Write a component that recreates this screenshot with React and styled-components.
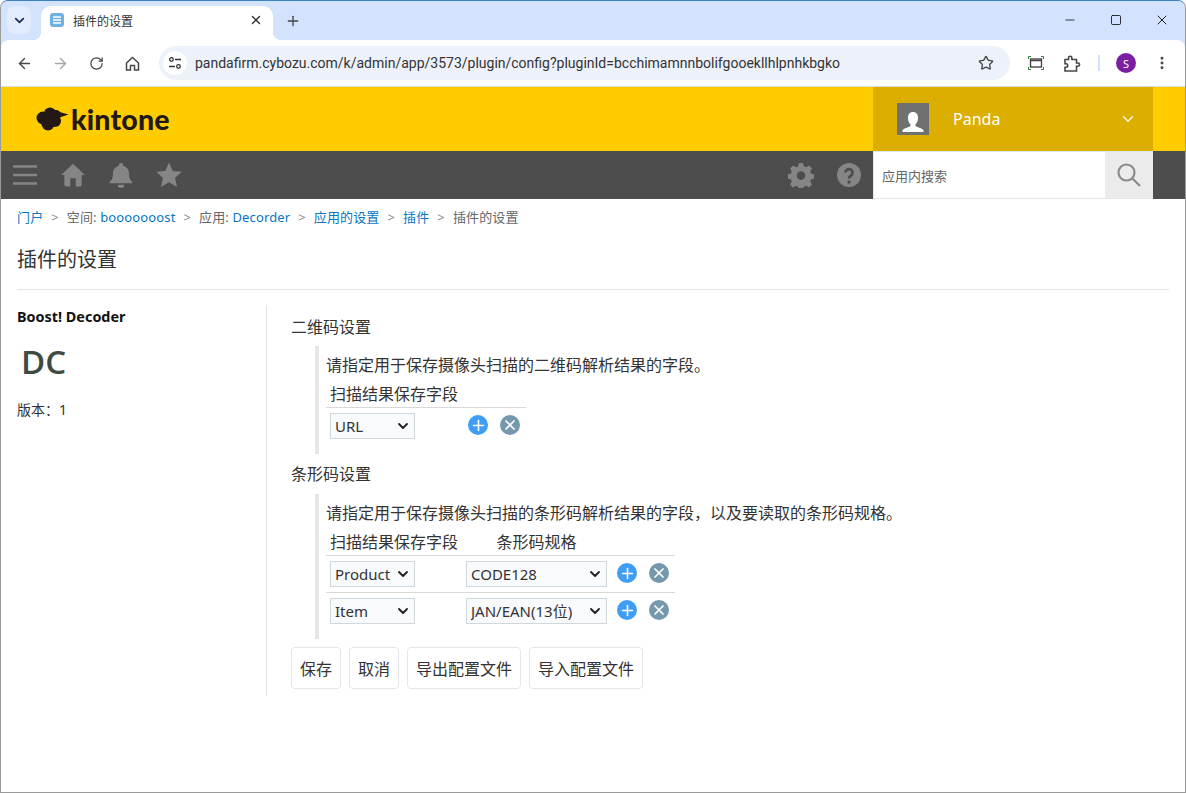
import styled, { createGlobalStyle } from "styled-components";
import {
  ArrowLeft,
  ArrowRight,
  ChevronDown,
  Minus,
  MoreVertical,
  Plus,
  RotateCw,
  Square,
  Star,
  X,
} from "lucide-react";

const GlobalStyle = createGlobalStyle`
  html, body {
    margin: 0;
    padding: 0;
    background: #fff;
  }
  * {
    box-sizing: border-box;
  }
`;

const FONT = `"Noto Sans", "Open Sans", "Noto Sans CJK SC", sans-serif`;
const CJK = `"Noto Sans CJK SC", "Noto Sans", sans-serif`;

const Window = styled.div`
  width: 1186px;
  height: 793px;
  overflow: hidden;
  display: flex;
  flex-direction: column;
  background: #d3e3fd;
  border-top: 1px solid #3b82c4;
  border-left: 1px solid #9a9a9a;
  border-right: 1px solid #9a9a9a;
  border-bottom: 1px solid #9a9a9a;
  border-radius: 8px 8px 0 0;
  font-family: ${FONT};
  color: #333;
`;

const TabStrip = styled.div`
  height: 39px;
  flex: none;
  display: flex;
  align-items: flex-start;
  background: #d3e3fd;
  padding: 5px 0 0 6px;
`;

const TabList = styled.div`
  width: 24px;
  height: 28px;
  display: flex;
  align-items: center;
  justify-content: center;
  border-radius: 8px;
  background: #e3ecfc;
  color: #1f3157;
`;

const Tab = styled.div`
  position: relative;
  width: 232px;
  height: 34px;
  margin-left: 10px;
  padding: 0 10px 6px 9px;
  display: flex;
  align-items: center;
  gap: 9px;
  border-radius: 10px 10px 0 0;
  background: #fff;
  font-family: ${CJK};
  font-size: 12px;
  color: #333;

  &::before,
  &::after {
    content: "";
    position: absolute;
    bottom: 0;
    width: 8px;
    height: 8px;
  }
  &::before {
    left: -8px;
    background: radial-gradient(circle at 0 0, transparent 8px, #fff 8px);
  }
  &::after {
    right: -8px;
    background: radial-gradient(circle at 100% 0, transparent 8px, #fff 8px);
  }
`;

const TabTitle = styled.span`
  flex: 1;
`;

const NewTab = styled.div`
  width: 40px;
  height: 30px;
  display: flex;
  align-items: center;
  justify-content: center;
  color: #444;
`;

const WindowControls = styled.div`
  margin-left: auto;
  display: flex;
  align-items: center;
  height: 28px;
  color: #000;
`;

const WindowButton = styled.div`
  width: 46px;
  display: flex;
  justify-content: center;
`;

const Toolbar = styled.div`
  height: 47px;
  flex: none;
  display: flex;
  align-items: center;
  background: #fff;
  padding-left: 5px;
  border-bottom: 1px solid #dcdcdc;
  border-radius: 8px 8px 0 0;
`;

const NavButton = styled.div`
  width: 36px;
  display: flex;
  justify-content: center;
  color: ${(p) => (p.$muted ? "#a3a6ab" : "#474747")};
`;

const AddressBar = styled.div`
  width: 851px;
  height: 34px;
  margin-left: 9px;
  padding: 0 16px 0 3px;
  display: flex;
  align-items: center;
  border-radius: 17px;
  background: #edf2fa;
  color: #474747;
`;

const SiteInfo = styled.div`
  width: 24px;
  height: 24px;
  margin-left: 1px;
  display: flex;
  align-items: center;
  justify-content: center;
  border-radius: 50%;
  background: #fff;
`;

const Url = styled.span`
  flex: 1;
  margin-left: 8px;
  font-family: "Roboto", sans-serif;
  font-size: 14px;
  color: #333;
`;

const ToolGroup = styled.div`
  display: flex;
  align-items: center;
  margin-left: 7px;
  color: #474747;
`;

const ToolIcon = styled.div`
  width: 37px;
  display: flex;
  justify-content: center;
`;

const Divider = styled.div`
  width: 2px;
  height: 16px;
  margin: 0 8px 0 7px;
  background: #d3e3fd;
`;

const Avatar = styled.div`
  width: 20px;
  height: 20px;
  margin-left: 8px;
  display: flex;
  align-items: center;
  justify-content: center;
  border-radius: 50%;
  background: #7b1fa2;
  color: #fff;
  font-size: 11px;
`;

const Dots = styled.div`
  margin-left: 18px;
  display: flex;
  color: #474747;
`;

const Header = styled.header`
  height: 64px;
  flex: none;
  display: flex;
  justify-content: space-between;
  background: #ffcc00;
  padding-right: 32px;
`;

const Logo = styled.div`
  display: flex;
  align-items: center;
  padding-left: 35px;
  gap: 2px;
`;

const LogoText = styled.span`
  font-family: "Lato", "Noto Sans", sans-serif;
  font-weight: 900;
  font-size: 28.5px;
  letter-spacing: 0.2px;
  color: #231815;
`;

const UserBox = styled.div`
  width: 280px;
  display: flex;
  align-items: center;
  padding: 0 16px 0 24px;
  background: #dbae00;
  color: #fff;
`;

const UserPhoto = styled.div`
  width: 32px;
  height: 32px;
  display: flex;
  align-items: flex-end;
  justify-content: center;
  background: #6f7070;
`;

const UserName = styled.span`
  flex: 1;
  margin-left: 24px;
  font-size: 16px;
`;

const NavBar = styled.nav`
  height: 48px;
  flex: none;
  display: flex;
  align-items: center;
  background: #4d4d4d;
  padding-right: 32px;
`;

const NavIcon = styled.div`
  width: 48px;
  height: 48px;
  display: flex;
  align-items: center;
  justify-content: center;
`;

const NavSpacer = styled.div`
  flex: 1;
`;

const SearchBox = styled.div`
  width: 280px;
  height: 48px;
  display: flex;
  background: #fff;
  border: 1px solid #e3e7e8;
  border-right: 0;
`;

const SearchText = styled.div`
  flex: 1;
  display: flex;
  align-items: center;
  padding-left: 8px;
  font-family: ${CJK};
  font-size: 13px;
  color: #666;
`;

const SearchButton = styled.div`
  width: 48px;
  display: flex;
  align-items: center;
  justify-content: center;
  background: #ebebeb;
`;

const Main = styled.main`
  flex: 1;
  padding: 0 16px;
  background: #fff;
`;

const Breadcrumb = styled.div`
  height: 36px;
  display: flex;
  align-items: center;
  padding-bottom: 1px;
  font-family: ${FONT};
  font-size: 13px;
  letter-spacing: 0.13px;
  color: #666;
`;

const Crumb = styled.a`
  color: #0675c4;
  text-decoration: none;
`;

const Sep = styled.span`
  margin: 0 8px;
  color: #888;
`;

const Title = styled.h1`
  margin: 0;
  height: 55px;
  padding-top: 10px;
  border-bottom: 1px solid #e3e3e3;
  font-family: ${CJK};
  font-weight: 400;
  font-size: 20px;
  line-height: 28px;
  color: #333;
`;

const Columns = styled.div`
  display: flex;
  margin-top: 15px;
`;

const Side = styled.aside`
  width: 250px;
  flex: none;
  height: 391px;
  border-right: 1px solid #e3e3e3;
`;

const PluginName = styled.div`
  font-weight: 700;
  font-size: 14.4px;
  line-height: 24px;
  color: #111;
`;

const PluginIcon = styled.div`
  margin: 11px 0 0 4px;
  font-family: "Open Sans", sans-serif;
  font-weight: 600;
  font-size: 33px;
  line-height: 44px;
  color: #3e4b43;
`;

const Version = styled.div`
  margin-top: 14px;
  font-size: 14px;
  line-height: 24px;
  color: #333;
`;

const Content = styled.div`
  flex: 1;
  padding: 2px 0 0 24px;
  font-size: 16px;
  color: #333;
`;

const SectionTitle = styled.div`
  line-height: 24px;
  padding-top: 8px;
`;

const Block = styled.div`
  margin: ${(p) => p.$gap}px 0 0 24px;
  padding: 7px 0 0 7px;
  height: ${(p) => p.$height}px;
  border-left: 4px solid #e3e7e8;
`;

const Description = styled.div`
  line-height: 24px;
`;

const Table = styled.table`
  border-collapse: collapse;
`;

const Th = styled.th`
  padding: 6px 4px 2px;
  font-weight: 400;
  line-height: 22px;
  white-space: nowrap;
  text-align: center;
  border-bottom: 1px solid #d8d8d8;
`;

const Td = styled.td`
  padding: 5px 4px;
  vertical-align: top;
  border-bottom: ${(p) => (p.$last ? "0" : "1px solid #d8d8d8")};
`;

const SelectWrap = styled.div`
  position: relative;
  width: ${(p) => p.$width}px;
  height: 26px;
`;

const Select = styled.select`
  width: 100%;
  height: 100%;
  padding: 0 0 0 4px;
  border: 1px solid #cfd8dc;
  border-radius: 0;
  background: #f9fafb;
  font-family: ${FONT};
  font-size: 15px;
  color: #333;
  appearance: none;
  outline: none;
`;

const Caret = styled.span`
  position: absolute;
  right: 4px;
  top: 5px;
  display: flex;
  pointer-events: none;
  color: #222;
`;

const Actions = styled.div`
  width: 54px;
  display: flex;
  justify-content: space-between;
  padding-left: 2px;
  margin: 2px 2px 0 0;
`;

const RoundButton = styled.div`
  width: 20px;
  height: 20px;
  display: flex;
  align-items: center;
  justify-content: center;
  border-radius: 50%;
  background: ${(p) => p.$bg};
  color: #fff;
`;

const Footer = styled.div`
  display: flex;
  gap: 8px;
  margin-top: 8px;
`;

const Button = styled.button`
  height: 42px;
  padding: 0 8px;
  border: 1px solid #e3e7e8;
  border-radius: 4px;
  background: #fff;
  font-family: ${CJK};
  font-size: 16px;
  color: #333;
`;

function Pick({ width, value }) {
  return (
    <SelectWrap $width={width}>
      <Select defaultValue={value}>
        <option>{value}</option>
      </Select>
      <Caret>
        <ChevronDown size={16} strokeWidth={2.8} />
      </Caret>
    </SelectWrap>
  );
}

function RowActions() {
  return (
    <Actions>
      <RoundButton $bg="#3f9ef3">
        <Plus size={17} strokeWidth={2.2} />
      </RoundButton>
      <RoundButton $bg="#7499ad">
        <X size={16} strokeWidth={2.6} />
      </RoundButton>
    </Actions>
  );
}

function FilledIcon({ d, size = 26 }) {
  return (
    <svg width={size} height={size} viewBox="0 0 24 24" fill="#858585">
      <path d={d} />
    </svg>
  );
}

function App() {
  return (
    <>
      <GlobalStyle />
      <Window>
        <TabStrip>
          <TabList>
            <ChevronDown size={15} strokeWidth={3} />
          </TabList>
          <Tab>
            <svg width="14" height="14" viewBox="0 0 14 14">
              <rect width="14" height="14" rx="3" fill="#6db2e0" />
              <path d="M3 4h8M3 7h8M3 10h8" stroke="#fff" strokeWidth="1.4" />
            </svg>
            <TabTitle>插件的设置</TabTitle>
            <X size={14} strokeWidth={2.4} color="#333" />
          </Tab>
          <NewTab>
            <Plus size={16} strokeWidth={2} />
          </NewTab>
          <WindowControls>
            <WindowButton>
              <Minus size={14} strokeWidth={1.3} />
            </WindowButton>
            <WindowButton>
              <Square size={12} strokeWidth={1.6} />
            </WindowButton>
            <WindowButton>
              <X size={16} strokeWidth={1.3} />
            </WindowButton>
          </WindowControls>
        </TabStrip>

        <Toolbar>
          <NavButton>
            <ArrowLeft size={17} strokeWidth={2} />
          </NavButton>
          <NavButton $muted>
            <ArrowRight size={17} strokeWidth={2} />
          </NavButton>
          <NavButton>
            <RotateCw size={15} strokeWidth={2} />
          </NavButton>
          <NavButton>
            <svg width="15" height="15" viewBox="0 0 15 15" fill="none" stroke="#474747" strokeWidth="1.5">
              <path d="M1.500 7L7.500 1.500L13.500 7V14H9.500V9.500H5.500V14H1.500Z" />
            </svg>
          </NavButton>
          <AddressBar>
            <SiteInfo>
              <svg width="14" height="14" viewBox="0 0 14 14" fill="none" stroke="#333" strokeWidth="1.3">
                <circle cx="3.500" cy="3.500" r="1.800" />
                <path d="M7 3.500h6M1 10.500h6" />
                <circle cx="10.500" cy="10.500" r="1.800" />
              </svg>
            </SiteInfo>
            <Url>pandafirm.cybozu.com/k/admin/app/3573/plugin/config?pluginId=bcchimamnnbolifgooekllhlpnhkbgko</Url>
            <Star size={16} strokeWidth={2} />
          </AddressBar>
          <ToolGroup>
            <ToolIcon>
              <svg width="16" height="14" viewBox="0 0 16 14" fill="none">
                <path d="M.5 3V.5H3M13 .5h2.500V3M.5 11v2.500H3M13 13.500h2.500V11" stroke="#2e7d32" />
                <rect x="2.500" y="3" width="11" height="8" stroke="#474747" strokeWidth="1.4" />
                <path d="M2.500 4.500h11" stroke="#474747" strokeWidth="1.4" />
              </svg>
            </ToolIcon>
            <ToolIcon>
              <svg width="17" height="17" viewBox="0 0 17 17" fill="none" stroke="#474747" strokeWidth="1.6">
                <path d="M1 4.500h3.500V3a1.700 1.700 0 0 1 3.400 0v1.500h4.600V8H14a1.600 1.600 0 0 1 0 3.200h-1.500V16H1v-3.800h1a1.700 1.700 0 0 0 0-3.400H1Z" />
              </svg>
            </ToolIcon>
            <Divider />
            <Avatar>S</Avatar>
            <Dots>
              <MoreVertical size={16} strokeWidth={2.4} />
            </Dots>
          </ToolGroup>
        </Toolbar>

        <Header>
          <Logo>
            <svg width="33" height="24" viewBox="0 0 33 24" fill="#231815">
              <circle cx="7" cy="11" r="6.500" />
              <circle cx="14" cy="6.500" r="6" />
              <circle cx="20" cy="8" r="5" />
              <circle cx="12" cy="17" r="6.500" />
              <circle cx="19" cy="14" r="6" />
              <path d="M20 4L32.500 7.500L22 11Z" />
            </svg>
            <LogoText>kintone</LogoText>
          </Logo>
          <UserBox>
            <UserPhoto>
              <svg width="24" height="24" viewBox="0 0 24 24" fill="#fff">
                <path d="M12 1c3 0 5 2 5 6 0 3-1 5-2.500 6.500V15c1 1 6 2 8 4v2H1.500v-2c2-2 7-3 8-4v-1.500C8 12 7 10 7 7c0-4 2-6 5-6Z" />
              </svg>
            </UserPhoto>
            <UserName>Panda</UserName>
            <ChevronDown size={18} strokeWidth={1.6} />
          </UserBox>
        </Header>

        <NavBar>
          <NavIcon>
            <svg width="26" height="22" viewBox="0 0 26 22" stroke="#858585" strokeWidth="2.4">
              <path d="M1 2.500h24M1 11h24M1 19.500h24" />
            </svg>
          </NavIcon>
          <NavIcon>
            <FilledIcon d="M12 1.500L1 12h3v9a1.500 1.500 0 0 0 1.500 1.500H9.500V15h5v7.500h4a1.500 1.500 0 0 0 1.500-1.500v-9h3Z" />
          </NavIcon>
          <NavIcon>
            <FilledIcon d="M12 1a2 2 0 0 1 2 2v.500c3.500 1 5.500 4 5.500 7.500 0 4 1 5.500 3 7.500v1H1.500v-1c2-2 3-3.500 3-7.500 0-3.500 2-6.500 5.500-7.500V3a2 2 0 0 1 2-2ZM9 21h6a3 3 0 0 1-6 0Z" />
          </NavIcon>
          <NavIcon>
            <FilledIcon d="M12 .5l3.500 7.700 8.300.9-6.200 5.600 1.800 8.300L12 18.700l-7.400 4.300 1.800-8.300L.2 9.100l8.300-.9Z" />
          </NavIcon>
          <NavSpacer />
          <NavIcon>
            <FilledIcon d="M10 1h4l.6 3 2.200.9 2.600-1.700 2.800 2.800-1.700 2.600.9 2.200 3 .6v4l-3 .6-.9 2.200 1.700 2.600-2.800 2.800-2.600-1.700-2.200.9-.6 3h-4l-.6-3-2.200-.9-2.600 1.700-2.800-2.800 1.700-2.600-.9-2.200-3-.6v-4l3-.6.900-2.200L1.900 6l2.800-2.800 2.600 1.700 2.200-.9ZM12 8.500a4 4 0 1 0 0 8 4 4 0 0 0 0-8Z" />
          </NavIcon>
          <NavIcon>
            <svg width="24" height="24" viewBox="0 0 24 24">
              <circle cx="12" cy="12" r="12" fill="#858585" />
              <path d="M8.500 9.500a3.500 3.500 0 1 1 5.500 3c-1.300.9-2 1.500-2 3" fill="none" stroke="#4d4d4d" strokeWidth="2.800" />
              <circle cx="12" cy="19" r="1.700" fill="#4d4d4d" />
            </svg>
          </NavIcon>
          <SearchBox>
            <SearchText>应用内搜索</SearchText>
            <SearchButton>
              <svg width="24" height="24" viewBox="0 0 24 24" fill="none" stroke="#8b8b8b" strokeWidth="2.200">
                <circle cx="9.500" cy="9.500" r="8" />
                <path d="M15.500 15.500L23 23" />
              </svg>
            </SearchButton>
          </SearchBox>
        </NavBar>

        <Main>
          <Breadcrumb>
            <Crumb>门户</Crumb>
            <Sep>&gt;</Sep>
            <span>
              空间: <Crumb>booooooost</Crumb>
            </span>
            <Sep>&gt;</Sep>
            <span>
              应用: <Crumb>Decorder</Crumb>
            </span>
            <Sep>&gt;</Sep>
            <Crumb>应用的设置</Crumb>
            <Sep>&gt;</Sep>
            <Crumb>插件</Crumb>
            <Sep>&gt;</Sep>
            <span>插件的设置</span>
          </Breadcrumb>
          <Title>插件的设置</Title>
          <Columns>
            <Side>
              <PluginName>Boost! Decoder</PluginName>
              <PluginIcon>DC</PluginIcon>
              <Version>版本：1</Version>
            </Side>
            <Content>
              <SectionTitle>二维码设置</SectionTitle>
              <Block $gap={7} $height={108}>
                <Description>请指定用于保存摄像头扫描的二维码解析结果的字段。</Description>
                <Table>
                  <thead>
                    <tr>
                      <Th>扫描结果保存字段</Th>
                      <Th />
                    </tr>
                  </thead>
                  <tbody>
                    <tr>
                      <Td $last>
                        <Pick width={85} value="URL" />
                      </Td>
                      <Td $last>
                        <RowActions />
                      </Td>
                    </tr>
                  </tbody>
                </Table>
              </Block>
              <SectionTitle>条形码设置</SectionTitle>
              <Block $gap={8} $height={145}>
                <Description>请指定用于保存摄像头扫描的条形码解析结果的字段，以及要读取的条形码规格。</Description>
                <Table>
                  <thead>
                    <tr>
                      <Th>扫描结果保存字段</Th>
                      <Th>条形码规格</Th>
                      <Th />
                    </tr>
                  </thead>
                  <tbody>
                    <tr>
                      <Td>
                        <Pick width={85} value="Product" />
                      </Td>
                      <Td>
                        <Pick width={141} value="CODE128" />
                      </Td>
                      <Td>
                        <RowActions />
                      </Td>
                    </tr>
                    <tr>
                      <Td $last>
                        <Pick width={85} value="Item" />
                      </Td>
                      <Td $last>
                        <Pick width={141} value="JAN/EAN(13位)" />
                      </Td>
                      <Td $last>
                        <RowActions />
                      </Td>
                    </tr>
                  </tbody>
                </Table>
              </Block>
              <Footer>
                <Button>保存</Button>
                <Button>取消</Button>
                <Button>导出配置文件</Button>
                <Button>导入配置文件</Button>
              </Footer>
            </Content>
          </Columns>
        </Main>
      </Window>
    </>
  );
}

export default App;
